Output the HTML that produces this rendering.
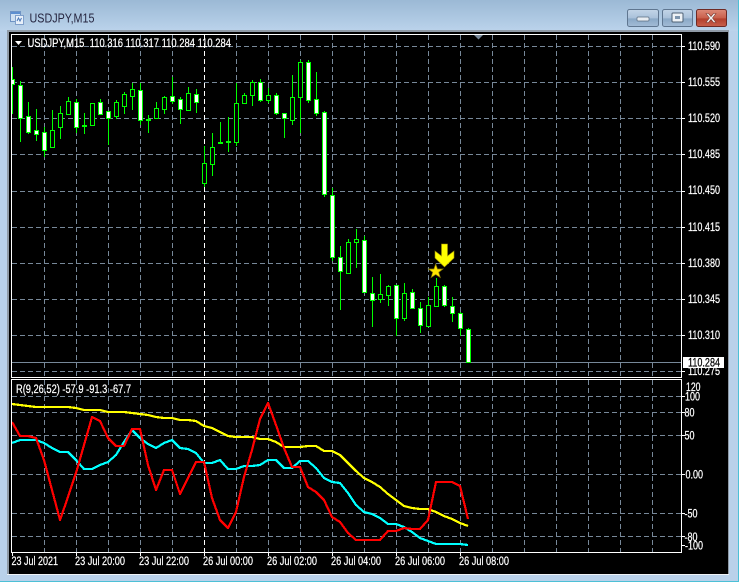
<!DOCTYPE html>
<html><head><meta charset="utf-8"><title>USDJPY,M15</title>
<style>
html,body{margin:0;padding:0;background:#b9d1ea;width:739px;height:582px;overflow:hidden}
svg{display:block;position:absolute;left:0;top:0}
text{font-family:"Liberation Sans",sans-serif;font-size:11.5px;fill:#fff;stroke:#fff;stroke-width:.22px}
</style></head><body>
<svg width="739" height="582" viewBox="0 0 739 582" xmlns="http://www.w3.org/2000/svg">
<defs>
<linearGradient id="t" x1="0" y1="0" x2="0" y2="1"><stop offset="0" stop-color="#9bb9d5"/><stop offset="1" stop-color="#bbd3eb"/></linearGradient>
<linearGradient id="b1" x1="0" y1="0" x2="0" y2="1"><stop offset="0" stop-color="#c3d5e8"/><stop offset=".5" stop-color="#a9c1da"/><stop offset=".55" stop-color="#8aa8c6"/><stop offset="1" stop-color="#a3bcd6"/></linearGradient>
<linearGradient id="b2" x1="0" y1="0" x2="0" y2="1"><stop offset="0" stop-color="#dd8a78"/><stop offset=".5" stop-color="#c9604c"/><stop offset=".55" stop-color="#b23f2c"/><stop offset="1" stop-color="#c9604c"/></linearGradient>
<clipPath id="m"><rect x="12" y="35" width="669" height="342"/></clipPath>
<clipPath id="i"><rect x="12" y="380" width="669" height="172"/></clipPath>
</defs>
<rect width="739" height="582" fill="#b9d1ea"/>
<rect x="0" y="0" width="739" height="31" fill="url(#t)"/>
<rect x="0" y="581" width="739" height="1" fill="#4cc0d6"/>
<rect x="738" y="0" width="1" height="582" fill="#4cc0d6"/>
<rect x="7" y="30" width="722" height="545" fill="#8f9aa6"/>
<rect x="7" y="574" width="722" height="1" fill="#eef2f6"/>
<rect x="9" y="32" width="719" height="542" fill="#000"/>

<!-- title -->
<g shape-rendering="crispEdges">
<rect x="10.5" y="11.5" width="10" height="10" fill="#cfe0f2" stroke="#6f93c4"/>
<rect x="11" y="12" width="9" height="2" fill="#5d8fd0"/>
<rect x="15.5" y="15.5" width="8" height="9" fill="#e8f0fa" stroke="#7f9fca"/>
</g>
<path d="M17 21l1.500-3 1.500 3 1.500-3" fill="none" stroke="#4a78b8"/>
<text x="29.5" y="22.5" textLength="65" lengthAdjust="spacingAndGlyphs" style="font-size:12.5px;fill:#25253f;stroke:none">USDJPY,M15</text>

<!-- buttons -->
<rect x="627.5" y="9.5" width="31" height="17" rx="2" fill="url(#b1)" stroke="#5f7690"/>
<rect x="637" y="17" width="12" height="4" rx="1" fill="#e8edf2" stroke="#5a6c80" stroke-width=".7"/>
<rect x="662.5" y="9.5" width="30" height="17" rx="2" fill="url(#b1)" stroke="#5f7690"/>
<rect x="672" y="13" width="11" height="9" rx="1" fill="#eef2f6" stroke="#4f6175"/>
<rect x="675" y="16" width="5" height="3" fill="#7d95ae"/>
<rect x="696.5" y="9.5" width="30" height="17" rx="2" fill="url(#b2)" stroke="#6e2a25"/>
<path d="M706 13.500l2.500 0 2.500 3 2.500-3 2.500 0-3.500 4.500 3.500 4.500-2.500 0-2.500-3-2.500 3-2.500 0 3.500-4.500z" fill="#f2f2f2" stroke="#7a3a32" stroke-width=".6"/>

<!-- grid -->
<g fill="none" stroke="#778899" stroke-width="1" stroke-dasharray="5 3" shape-rendering="crispEdges">
<path d="M12 46.500H681M12 82.500H681M12 118.500H681M12 154.500H681M12 191.500H681M12 227.500H681M12 263.500H681M12 299.500H681M12 335.500H681M12 371.500H681"/>
<path d="M12 396.500H681M12 412.500H681M12 435.500H681M12 474.500H681M12 513.500H681M12 536.500H681"/>
<path d="M44.500 35V377M76.500 35V377M108.500 35V377M140.500 35V377M172.500 35V377M236.500 35V377M268.500 35V377M300.500 35V377M332.500 35V377M364.500 35V377M396.500 35V377M428.500 35V377M460.500 35V377M492.500 35V377M524.500 35V377M556.500 35V377M588.500 35V377M620.500 35V377M652.500 35V377"/>
<path d="M44.500 380V552M76.500 380V552M108.500 380V552M140.500 380V552M172.500 380V552M236.500 380V552M268.500 380V552M300.500 380V552M332.500 380V552M364.500 380V552M396.500 380V552M428.500 380V552M460.500 380V552M492.500 380V552M524.500 380V552M556.500 380V552M588.500 380V552M620.500 380V552M652.500 380V552"/>
<path stroke="#fff" d="M204.500 35V377M204.500 380V552"/>
</g>

<!-- current price line -->
<path d="M12 362.500H681" stroke="#778899" shape-rendering="crispEdges"/>

<!-- candles -->
<g clip-path="url(#m)" shape-rendering="crispEdges">
<path fill="none" stroke="#0f0" d="M12.500 67V114M20.500 81V142M28.500 102V134M36.500 109V141M44.500 127V157M52.500 110V148M60.500 106V139M68.500 97V114M76.500 99V133M84.500 113V134M100.500 99V115M108.500 111V145M116.500 100V119M124.500 92V114M132.500 83V110M140.500 83V125M148.500 115V133M156.500 102V118M164.500 96V114M172.500 77V104M180.500 97V124M188.500 87V111M196.500 89V113M204.500 146V187M212.500 133V176M220.500 122V144M228.500 117V152M236.500 83V146M244.500 93V104M252.500 80V106M260.500 79V102M268.500 88V103M276.500 93V115M284.500 113V138M292.500 75V125M300.500 60V133M308.500 60V103M316.500 72V116M324.500 111V197M332.500 188V261M340.500 246V310M348.500 239V274M356.500 229V268M364.500 236V293M372.500 277V327M380.500 274V303M388.500 285V306M396.500 285V336M404.500 283V321M412.500 289V308M420.500 302V333M428.500 297V326M436.500 278V307M444.500 285V307M452.500 297V322M460.500 312V336M468.500 328V362"/>
<g fill="#0f0" stroke="none">
<rect x="82" y="125" width="5" height="2"/><rect x="146" y="119" width="5" height="2"/><rect x="218" y="142" width="5" height="2"/><rect x="226" y="141" width="5" height="2"/>
</g>
<g fill="#fff" stroke="#0f0">
<rect x="10.5" y="79.5" width="4" height="5"/>
<rect x="18.5" y="85.5" width="4" height="33"/>
<rect x="26.5" y="116.5" width="4" height="16"/>
<rect x="34.5" y="130.5" width="4" height="4"/>
<rect x="42.5" y="132.5" width="4" height="18"/>
<rect x="74.5" y="102.5" width="4" height="25"/>
<rect x="98.5" y="102.5" width="4" height="12"/>
<rect x="106.5" y="111.5" width="4" height="7"/>
<rect x="138.5" y="90.5" width="4" height="30"/>
<rect x="170.5" y="96.5" width="4" height="5"/>
<rect x="178.5" y="99.5" width="4" height="10"/>
<rect x="194.5" y="94.5" width="4" height="8"/>
<rect x="258.5" y="82.5" width="4" height="18"/>
<rect x="274.5" y="95.5" width="4" height="18"/>
<rect x="282.5" y="113.5" width="4" height="5"/>
<rect x="306.5" y="62.5" width="4" height="38"/>
<rect x="314.5" y="99.5" width="4" height="14"/>
<rect x="322.5" y="112.5" width="4" height="82"/>
<rect x="330.5" y="195.5" width="4" height="62"/>
<rect x="338.5" y="257.5" width="4" height="14"/>
<rect x="362.5" y="240.5" width="4" height="52"/>
<rect x="370.5" y="293.5" width="4" height="7"/>
<rect x="394.5" y="285.5" width="4" height="33"/>
<rect x="410.5" y="292.5" width="4" height="16"/>
<rect x="418.5" y="308.5" width="4" height="17"/>
<rect x="442.5" y="286.5" width="4" height="19"/>
<rect x="450.5" y="306.5" width="4" height="7"/>
<rect x="458.5" y="313.5" width="4" height="15"/>
<rect x="466.5" y="329.5" width="4" height="33"/>
</g>
<g fill="#000" stroke="#0f0">
<rect x="50.5" y="130.5" width="4" height="17"/>
<rect x="58.5" y="113.5" width="4" height="14"/>
<rect x="66.5" y="101.5" width="4" height="13"/>
<rect x="90.5" y="103.5" width="4" height="22"/>
<rect x="114.5" y="102.5" width="4" height="14"/>
<rect x="122.5" y="94.5" width="4" height="12"/>
<rect x="130.5" y="89.5" width="4" height="7"/>
<rect x="154.5" y="108.5" width="4" height="10"/>
<rect x="162.5" y="97.5" width="4" height="12"/>
<rect x="186.5" y="93.5" width="4" height="17"/>
<rect x="202.5" y="163.5" width="4" height="20"/>
<rect x="210.5" y="147.5" width="4" height="17"/>
<rect x="234.5" y="103.5" width="4" height="39"/>
<rect x="242.5" y="95.5" width="4" height="8"/>
<rect x="250.5" y="82.5" width="4" height="13"/>
<rect x="266.5" y="95.5" width="4" height="5"/>
<rect x="290.5" y="97.5" width="4" height="23"/>
<rect x="298.5" y="62.5" width="4" height="35"/>
<rect x="346.5" y="242.5" width="4" height="31"/>
<rect x="354.5" y="239.5" width="4" height="3"/>
<rect x="378.5" y="294.5" width="4" height="5"/>
<rect x="386.5" y="286.5" width="4" height="9"/>
<rect x="402.5" y="293.5" width="4" height="25"/>
<rect x="426.5" y="305.5" width="4" height="21"/>
<rect x="434.5" y="286.5" width="4" height="20"/>
</g>
</g>

<!-- arrow and star -->
<path d="M441.500 244H447.500V256L454 251V258L444.500 267L435 258V251L441.500 256Z" fill="#ffff00" stroke="#a09000" stroke-width=".6"/>
<path d="M435.700 264L437.500 269H443L438.700 272.300L440.300 277.500L435.700 274.500L431.100 277.500L432.700 272.300L428.400 269H433.900Z" fill="#ffe600" stroke="#8a7a00" stroke-width=".7"/>

<!-- indicator -->
<g clip-path="url(#i)" fill="none" stroke-width="2.2" stroke-linejoin="round" shape-rendering="crispEdges">
<polyline stroke="#ffff00" points="12,404 20,405 28,406 36,407 44,407 52,407 60,407 68,407 76,408 84,410 92,410 100,410 108,412 116,412 124,412 132,413 140,414 148,415 156,417 164,418 172,418 180,420 188,420 196,421 204,426 212,428 220,432 228,436 236,437 244,437 252,437 260,439 268,439 276,442 284,447 292,447 300,447 308,446 316,446 324,451 332,451 340,455 348,463 356,471 364,478 372,482 380,487 388,494 396,500 404,506 412,508 420,509 428,509 436,512 444,516 452,519 460,523 468,526"/>
<polyline stroke="#00ffff" points="12,443 20,440 28,440 36,440 44,443 52,448 60,452 68,452 76,460 84,469 92,469 100,465 108,462 116,455 124,442 132,430 140,438 148,444 156,448 164,443 172,440 180,448 188,449 196,453 204,463 212,463 220,460 228,469 236,469 244,466 252,466 260,465 268,460 276,460 284,468 292,468 300,461 308,461 316,468 324,478 332,482 340,483 348,493 356,505 364,512 372,514 380,518 388,524 396,524 404,527 412,532 420,538 428,541 436,544 444,544 452,544 460,544 468,545"/>
<polyline stroke="#ff0000" points="12,422 20,436 28,436 36,438 44,460 52,490 60,520 68,497 76,473 84,445 92,417 100,421 108,438 116,446 124,446 132,429 140,429 148,465 156,490 164,470 172,470 180,494 188,478 196,462 204,462 212,498 220,520 228,528 236,512 244,477 252,450 260,419 268,403 276,425 284,448 292,467 300,467 308,487 316,492 324,500 332,517 340,522 348,533 356,540 364,540 372,540 380,540 388,531 396,531 404,528 412,529 420,529 428,520 436,482 444,482 452,482 460,486 468,519"/>
</g>

<!-- frames -->
<g fill="none" stroke="#fff" shape-rendering="crispEdges">
<rect x="11.5" y="34.5" width="670" height="343"/>
<rect x="11.5" y="379.5" width="670" height="173"/>
<path d="M682 46.500h3M682 82.500h3M682 118.500h3M682 154.500h3M682 191.500h3M682 227.500h3M682 263.500h3M682 299.500h3M682 335.500h3M682 371.500h3M682 396.500h3M682 412.500h3M682 435.500h3M682 474.500h3M682 513.500h3M682 536.500h3M682 545.500h3"/>
<path d="M12.500 553v3M76.500 553v3M140.500 553v3M204.500 553v3M268.500 553v3M332.500 553v3M396.500 553v3M460.500 553v3"/>
</g>
<path d="M474 35H483L478.500 39.500Z" fill="#778899"/>
<path d="M15 41H22L18.500 45Z" fill="#fff"/>

<!-- header texts -->
<text x="27.5" y="47" textLength="203.5" lengthAdjust="spacingAndGlyphs" xml:space="preserve">USDJPY,M15  110.316 110.317 110.284 110.284</text>
<text x="16" y="393" textLength="115" lengthAdjust="spacingAndGlyphs">R(9,26,52) -57.9 -91.3 -67.7</text>

<!-- right price scale -->
<g>
<text x="688" y="50" textLength="32" lengthAdjust="spacingAndGlyphs">110.590</text>
<text x="688" y="86" textLength="32" lengthAdjust="spacingAndGlyphs">110.555</text>
<text x="688" y="122" textLength="32" lengthAdjust="spacingAndGlyphs">110.520</text>
<text x="688" y="158" textLength="32" lengthAdjust="spacingAndGlyphs">110.485</text>
<text x="688" y="194" textLength="32" lengthAdjust="spacingAndGlyphs">110.450</text>
<text x="688" y="231" textLength="32" lengthAdjust="spacingAndGlyphs">110.415</text>
<text x="688" y="267" textLength="32" lengthAdjust="spacingAndGlyphs">110.380</text>
<text x="688" y="303" textLength="32" lengthAdjust="spacingAndGlyphs">110.345</text>
<text x="688" y="339" textLength="32" lengthAdjust="spacingAndGlyphs">110.310</text>
<text x="688" y="375" textLength="32" lengthAdjust="spacingAndGlyphs">110.275</text>
</g>
<rect x="683" y="357" width="41" height="11" fill="#fff"/>
<text x="688" y="366.5" textLength="32" lengthAdjust="spacingAndGlyphs" style="fill:#000;stroke:#000">110.284</text>

<!-- indicator scale -->
<text x="686" y="391" textLength="14.5" lengthAdjust="spacingAndGlyphs">120</text>
<text x="685" y="400.5" textLength="15" lengthAdjust="spacingAndGlyphs">100</text>
<text x="684.5" y="416.5" textLength="10" lengthAdjust="spacingAndGlyphs">80</text>
<text x="684.5" y="439.5" textLength="10" lengthAdjust="spacingAndGlyphs">50</text>
<text x="685.5" y="478.5" textLength="17.5" lengthAdjust="spacingAndGlyphs">0.00</text>
<text x="684.5" y="517.5" textLength="13" lengthAdjust="spacingAndGlyphs">-50</text>
<text x="684.5" y="541" textLength="13" lengthAdjust="spacingAndGlyphs">-80</text>
<text x="685" y="549.5" textLength="18" lengthAdjust="spacingAndGlyphs">-100</text>

<!-- time scale -->
<text x="11.5" y="565" textLength="46.5" lengthAdjust="spacingAndGlyphs">23 Jul 2021</text>
<text x="75" y="565" textLength="50" lengthAdjust="spacingAndGlyphs">23 Jul 20:00</text>
<text x="139" y="565" textLength="50" lengthAdjust="spacingAndGlyphs">23 Jul 22:00</text>
<text x="203" y="565" textLength="50" lengthAdjust="spacingAndGlyphs">26 Jul 00:00</text>
<text x="267" y="565" textLength="50" lengthAdjust="spacingAndGlyphs">26 Jul 02:00</text>
<text x="331" y="565" textLength="50" lengthAdjust="spacingAndGlyphs">26 Jul 04:00</text>
<text x="395" y="565" textLength="50" lengthAdjust="spacingAndGlyphs">26 Jul 06:00</text>
<text x="459" y="565" textLength="50" lengthAdjust="spacingAndGlyphs">26 Jul 08:00</text>
</svg>
</body></html>
